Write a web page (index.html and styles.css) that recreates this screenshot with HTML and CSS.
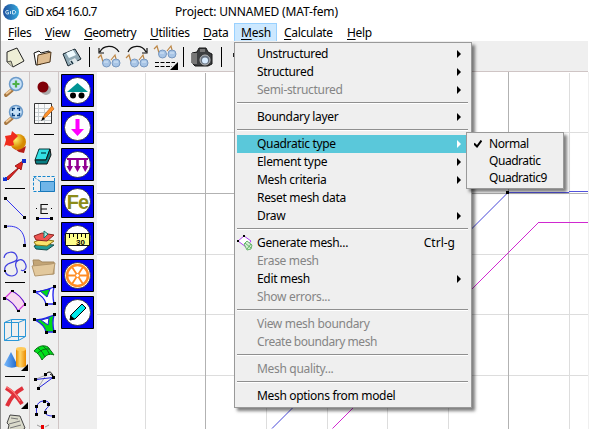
FILE: index.html
```html
<!DOCTYPE html>
<html lang="en">
<head>
<meta charset="utf-8">
<title>GiD x64 16.0.7</title>
<link rel="stylesheet" href="styles.css">
</head>
<body>
<div class="window">
  <header class="titlebar">
    <svg class="logo" viewBox="0 0 16 16"><defs><linearGradient id="lg"><stop offset="0" stop-color="#1f4f9c"/><stop offset="1" stop-color="#35a9dc"/></linearGradient></defs><circle cx="8" cy="8" r="8" fill="url(#lg)"/><path d="M5.5 6.5H3.5L2.5 8l1 2h2V8.300H4.500M7.500 7v3M9.500 6.500h2l1.500 1.500-1.500 2h-2z" fill="none" stroke="#d5ecf8" stroke-width=".9"/></svg>
    <span class="app">GiD x64 16.0.7</span>
    <span class="project">Project: UNNAMED (MAT-fem)</span>
  </header>
  <nav class="menubar">
    <span class="m-files"><u>F</u>iles</span><span class="m-view"><u>V</u>iew</span><span class="m-geo"><u>G</u>eometry</span><span class="m-util"><u>U</u>tilities</span><span class="m-data"><u>D</u>ata</span><span class="m-mesh"><u>M</u>esh</span><span class="m-calc"><u>C</u>alculate</span><span class="m-help"><u>H</u>elp</span>
  </nav>
  <div class="toolbar">
    <svg viewBox="1 41 28 30" width="28" height="30"><path d="M7 52l10-4 7 13-11 6-6-5z" fill="#eeeed6" stroke="#222"/><path d="M7 62l4-1 2 6" fill="#c8c8ae" stroke="#333" stroke-width=".8"/></svg>
    <svg viewBox="29 41 28 30" width="28" height="30"><path d="M34 53l5-2 2 2 8-2 1 3-9 10-5 1z" fill="#fff" stroke="#111"/><path d="M38 55l13-3-1 10-13 3z" fill="#dfbd91" stroke="#4d3519"/></svg>
    <svg viewBox="57 41 29 30" width="29" height="30"><path d="M63 54l12-5 6 10-13 7z" fill="#8fa9b5" stroke="#15252e"/><path d="M66 53l7-3 3 5-7 3z" fill="#eefbff"/><path d="M69 61l6-3 3 4-6 3z" fill="#dfe8eb"/><path d="M71 61l2 3" stroke="#193341" stroke-width="1.500"/></svg>
    <i class="vsep"></i>
    <svg viewBox="94 41 28 30" width="28" height="30"><use href="#glasses" x="0" y="0"/><path d="M100 52c3-7 14-8 19 0M99 48v5h5" fill="none" stroke="#111" stroke-width="1.200"/></svg>
    <svg viewBox="122 41 30 30" width="30" height="30"><use href="#glasses" x="28" y="0"/><path d="M128 52c3-7 14-8 18 0M147 48v5h-5" fill="none" stroke="#111" stroke-width="1.200"/></svg>
    <svg viewBox="152 41 28 30" width="28" height="30"><use href="#glasses" x="56" y="-9"/><path d="M155 62.500h20M155 66.500h17" stroke="#000" stroke-dasharray="4 1.500"/><path d="M178 62v8h-8z"/></svg>
    <i class="vsep"></i>
    <svg viewBox="188 41 30 30" width="30" height="30"><path d="M192 53l5-1 2-4h7l2 4 4 2v10l-4 2h-13l-3-3z" fill="#3c3e40" stroke="#151515"/><path d="M192 53h5v11h-5zM200 49h5v3h-5z" fill="#777"/><circle cx="205" cy="60" r="5" fill="#687381" stroke="#bbb"/><circle cx="205" cy="60.500" r="3" fill="#d9ecff"/></svg>
    <i class="vsep third"></i>
    <i class="peek"></i>
  </div>
  <svg width="0" height="0" class="defs"><defs>
    <g id="glasses"><path d="M98 58l3-3 2 7M111 60l4-5 2 8" fill="none" stroke="#bd8746" stroke-width="1.200"/><circle cx="106.500" cy="63" r="4" fill="#a8c5e6" stroke="#7898c0"/><circle cx="116" cy="63" r="4" fill="#a8c5e6" stroke="#7898c0"/><path d="M104 62h4M114 62h4" stroke="#d7e7f7"/></g>
    <g id="badge"><path d="M.5.500h32v32H.5z" fill="#0000f0" stroke="#000"/><circle cx="16.500" cy="16.500" r="13" fill="#fff" stroke="#111" stroke-width=".7"/></g>
    <linearGradient id="cone"><stop offset="0" stop-color="#7bbcff"/><stop offset="1" stop-color="#1761c7"/></linearGradient>
    <linearGradient id="cyl"><stop offset="0" stop-color="#e78b00"/><stop offset=".4" stop-color="#ffd568"/><stop offset="1" stop-color="#ec8c00"/></linearGradient>
    <radialGradient id="ball" cx=".35" cy=".35"><stop offset="0" stop-color="#fff26b"/><stop offset="1" stop-color="#d78b00"/></radialGradient>
  </defs></svg>
  <main class="work">
    <div class="tools one">
      <svg viewBox="1 72 28 28"><path d="M6 95l6-5" stroke="#a77842" stroke-width="4" stroke-linecap="round"/><path d="M6 94l5-4" stroke="#f0c997" stroke-width="2"/><circle cx="16" cy="84" r="6.500" fill="#c7e1f7" stroke="#6c9bca" stroke-width="1.500"/><path d="M16 80.500v7M12.500 84h7" stroke="#4fb04a" stroke-width="2.200"/></svg>
      <svg viewBox="1 100 28 28"><path d="M6 123l6-5" stroke="#a77842" stroke-width="4" stroke-linecap="round"/><path d="M6 122l5-4" stroke="#f0c997" stroke-width="2"/><circle cx="16" cy="112" r="6.500" fill="#c7e1f7" stroke="#6c9bca" stroke-width="1.500"/><path d="M12.500 111v-2.500h2.500M17 108.500h2.500v2.500M19.500 113v2.500h-2.500M15 115.500h-2.500v-2.500" fill="none" stroke="#063e7c" stroke-width="1.400"/></svg>
      <svg viewBox="1 128 28 28"><circle cx="18" cy="142" r="8" fill="url(#ball)"/><path d="M5 136l6-1 1-4 6 5-5 5 1 4-4 1-4-1-2 2 2-7z" fill="#ef2c1d"/><path d="M12 147l5 3 4-1 5-3-2 7-5-1z" fill="#b61e17"/></svg>
      <svg viewBox="1 156 28 28"><path d="M6 178L18 168l-3-2 8-5-2 9-2-2L8 180z" fill="#e02420" stroke="#a01818"/><path d="M3 177h4v4H3zM22 159h4v4h-4z" fill="#1330ce"/><path d="M3.500 177.500h1.500" stroke="#9dc5ff"/></svg>
      <i class="hsep"></i>
      <svg viewBox="1 194 28 28"><path d="M5 198l20 20" stroke="#3333ee"/><path d="M4 197h3v3H4zM23 216h3v3h-3z"/></svg>
      <svg viewBox="1 222 28 28"><path d="M5 226.500c13-2 20 5 20 18" fill="none" stroke="#3333ee"/><path d="M4 225h3v3H4zM23 244h3v3h-3z"/></svg>
      <svg viewBox="1 250 28 28"><path d="M4 258c1-7 11-8 13-1 1 5-5 5-9 7-6 4-3 12 4 12 6-1 6-5 4-9-2-7 6-10 9-4 3 5-1 9-4 7" fill="none" stroke="#4040e0" stroke-width="1.200"/><path d="M4 270h2v2H4zM24 271h2v2h-2z"/></svg>
      <i class="hsep"></i>
      <svg viewBox="1 288 28 28"><path d="M5 298l7-7c6 3 10 7 13 13l-7 7c-3-6-7-10-13-13z" fill="#f7d8f0" stroke="#d337dd" stroke-width="1.200"/><path d="M12 291c6 3 10 7 13 13M5 298c6 3 10 7 13 13" fill="none" stroke="#4b32cd"/><path d="M3 297h3v3H3zM11 290h3v2h-3zM24 303h2v3h-2zM17 310h3v2h-3z"/></svg>
      <svg viewBox="1 316 28 28"><path d="M4.500 322.500h14v18h-14zM11.500 319.500h14v17h-14zM4.500 322.500l7-3M18.500 322.500l7-3M4.500 340.500l7-4M18.500 340.500l7-4" fill="none" stroke="#2996d7"/></svg>
      <svg viewBox="1 344 28 28"><path d="M4 365l7-13 7 14q-7 4-14-1z" fill="url(#cone)"/><path d="M16 349v17q5 3 10 0v-17z" fill="url(#cyl)"/><ellipse cx="21" cy="349" rx="5" ry="2" fill="#ffcb5a"/><path d="M28 364v7h-7z"/></svg>
      <i class="hsep"></i>
      <svg viewBox="1 382 28 28"><path d="M6 388q9 5 16 16M23 388q-11 6-16 18" fill="none" stroke="#e0303a" stroke-width="4"/><path d="M6 387q9 4 14 14" fill="none" stroke="#ff7c79" stroke-width="1.300"/><path d="M28 402v7h-7z"/></svg>
      <svg viewBox="1 410 28 28"><path d="M10 415l10 1 5 12-7 6H7l2-9-2-2z" fill="#dadacb" stroke="#454545"/><path d="M11 418l7 1M9 424l11-3M10 428l11-3" stroke="#777"/></svg>
    </div>
    <div class="tools two">
      <svg viewBox="30 72 28 28"><circle cx="46" cy="90" r="5" fill="#aaa"/><circle cx="43" cy="87" r="5.500" fill="#800008"/></svg>
      <svg viewBox="30 100 28 28"><path d="M34.500 103.500h17v20h-17z" fill="#fafafa" stroke="#333"/><path d="M35 108.500h16M35 112.500h16M35 116.500h16M35 120.500h16M38.500 104v19M44.500 104v19" stroke="#c8ced0"/><path d="M42 119l3-5 7-8 2 3-8 8z" fill="#ff922b" stroke="#b8641b" stroke-width=".7"/><path d="M41 121l2-4 2 2z"/></svg>
      <i class="hsep tall"></i>
      <svg viewBox="30 142 28 28"><path d="M39 149h11l-4 11H35z" fill="#33e0e5" stroke="#08383b"/><path d="M35 160h11l4-11 1 6-4 9H36z" fill="#087e83" stroke="#111"/><path d="M41 153h5" stroke="#075f64" stroke-width="1.500"/></svg>
      <svg viewBox="30 170 28 28"><path d="M33.500 176.500h21v15h-21zM34 177l7 5" fill="none" stroke="#1687ce" stroke-dasharray="3 1.500"/><path d="M40.500 181.500h14v10h-14z" fill="#70b5e8" stroke="#1878ba"/></svg>
      <svg viewBox="30 198 28 28"><path d="M48 204.500h-7v9h7M41 209h6" fill="none" stroke="#111" stroke-width="1.200"/><path d="M37 218.500h14" stroke="#2222ee"/><path d="M36 217h3v3h-3zM50 217h3v3h-3zM36 208h1v1h-1zM51 208h1v1h-1z"/></svg>
      <svg viewBox="30 226 28 28"><path d="M34 246l7-2 13 1-7 5-11-1z" fill="#219c97" stroke="#164b4a"/><path d="M34 242l8-3 12 2-7 5-11-1z" fill="#fbe26b" stroke="#8a7411"/><path d="M34 236l8-3 12 2-7 6-11-1z" fill="#ee5551" stroke="#872320"/><path d="M44 238v-7l4 3z" fill="#a7e7df" stroke="#167870"/></svg>
      <svg viewBox="30 254 28 28"><path d="M33 260h6l3 2h12v12H35z" fill="#c3a576" stroke="#a3875d"/><path d="M32 266l19-2 4-1-2 11-18 2z" fill="#e2c89c" stroke="#b3976d"/></svg>
      <svg viewBox="30 282 28 28"><path d="M35 292c8 0 13-3 19-5-2 7-1 12 0 17h-8c-1-5-5-9-11-12z" fill="#fff" stroke="#2020ee" stroke-width="1.300"/><path d="M40 291l10-2-3 8z" fill="#00d91a" stroke="#2020dd"/><path d="M33 290h3v3h-3zM53 285h3v3h-3zM45 303h3v3h-3zM53 302h3v3h-3z"/></svg>
      <svg viewBox="30 310 28 28"><path d="M35 320c8 0 13-3 19-5-2 7-1 12 0 17h-8c-1-5-5-9-11-12z" fill="#00d91a" stroke="#2020ee" stroke-width="1.300"/><path d="M41 320l8-2-1 7z" fill="#fff" stroke="#2020dd"/><path d="M33 318h3v3h-3zM53 313h3v3h-3zM45 331h3v3h-3zM53 330h3v3h-3z"/></svg>
      <svg viewBox="30 338 28 28"><path d="M34 351c5-6 10-6 14-4l6 8c-5-2-8 0-12 5-2-4-4-7-8-9z" fill="#00e01c" stroke="#0b6f17"/><path d="M38 348q5 4 7 9M43 346q5 4 7 9M37 354q5-6 13-5" fill="none" stroke="#0b6f17"/></svg>
      <svg viewBox="30 366 28 28"><path d="M36 379l10-4-8 13" fill="none" stroke="#aaa"/><path d="M36 379.500l17-2-15 11" fill="none" stroke="#2222dd"/><path d="M47 373q4-3 6 3l-3-2" fill="none" stroke="#000"/><path d="M34 378h3v3h-3zM44 373h3v3h-3zM52 376h3v3h-3zM37 387h3v3h-3z"/></svg>
      <svg viewBox="30 394 28 28"><path d="M37 415c-2-9 1-14 7-14 7 0 6 5 2 8-3 5 1 7 7 7" fill="none" stroke="#2222dd"/><path d="M35 413h3v3h-3zM35 405h3v3h-3zM43 400h3v3h-3zM47 403h3v3h-3zM44 411h3v3h-3zM52 415h3v3h-3z"/></svg>
      <svg viewBox="30 422 28 28"><path d="M41 425h3v4h-3z" fill="#e80000"/><path d="M37 425l4 2M45 427l4-2" stroke="#999"/></svg>
    </div>
    <div class="badges">
      <svg viewBox="0 0 33 33"><use href="#badge"/><path d="M6 18l10.500-9L27 18z" fill="#009393"/><circle cx="12" cy="21.500" r="3"/><circle cx="20.500" cy="21.500" r="3"/></svg>
      <svg viewBox="0 0 33 33"><use href="#badge"/><path d="M14.500 8h4v10h4.500l-6.500 7-6.500-7h4.500z" fill="#f0f"/></svg>
      <svg viewBox="0 0 33 33"><use href="#badge"/><path d="M6 10h21v2H6zM7.500 12h2.500v6h2l-3.200 6-3.300-6h2zM15.200 12h2.600v6h2l-3.300 6-3.300-6h2zM23 12h2.500v6h2l-3.300 6-3.200-6h2z" fill="#920092"/></svg>
      <svg viewBox="0 0 33 33"><use href="#badge"/><text x="16.500" y="24" text-anchor="middle" class="fe">Fe</text></svg>
      <svg viewBox="0 0 33 33"><use href="#badge"/><path d="M4.500 11.500h24v12h-24z" fill="#ffff8b" stroke="#111"/><path d="M8.500 12v4M12.500 12v3M16.500 12v5M20.500 12v3M24.500 12v4" stroke="#000"/><text x="19.500" y="23" text-anchor="middle" class="thirty">30</text></svg>
      <svg viewBox="0 0 33 33"><use href="#badge"/><circle cx="16.500" cy="16.500" r="10.500" fill="none" stroke="#ff8d24" stroke-width="2.500"/><path d="M6 16.500h21M11 8l11 17M22 8L11 25" stroke="#ff8d24" stroke-width="1.800"/><circle cx="16.500" cy="16.500" r="2" fill="#fff" stroke="#ff8d24"/></svg>
      <svg viewBox="0 0 33 33"><use href="#badge"/><path d="M10 19L21 8l4 4-11 11-5 1z" fill="#00e8e8" stroke="#000"/><path d="M9 19l5 4-5 1z"/></svg>
    </div>
    <svg class="canvas" viewBox="97 72 491 357" shape-rendering="crispEdges">
      <path d="M145.500 73v356M266.500 73v356M327.500 73v356M387.500 73v356M448.500 73v356M569.500 73v356M97 132.500h491M97 254.500h491M97 314.500h491M97 375.500h491" stroke="#ddd"/>
      <path d="M205.500 73v356M508.500 72v357M97 193.500h491" stroke="#b2b2b2"/>
      <path d="M508 192.500h61M569 191.500h19" fill="none" stroke="#5353dc"/>
      <path d="M538 222.500h50" stroke="#d029d0"/>
      <path class="slope" d="M272 428.500L508 192.500" stroke="#4747d8"/>
      <path class="slope" d="M332.500 428.500L538.500 222.500" stroke="#d029d0"/>
      <path d="M506 191h3v3h-3z"/>
    </svg>
  </main>
</div>
<div class="menu mesh">
  <div class="sub"><b>Unstructured</b></div>
  <div class="sub"><b>Structured</b></div>
  <div class="sub off"><b>Semi-structured</b></div>
  <hr>
  <div class="sub"><b>Boundary layer</b></div>
  <hr>
  <div class="sub active"><b>Quadratic type</b></div>
  <div class="sub"><b>Element type</b></div>
  <div class="sub"><b>Mesh criteria</b></div>
  <div><b>Reset mesh data</b></div>
  <div class="sub"><b>Draw</b></div>
  <hr>
  <div><svg class="gen" viewBox="0 0 17 17"><path d="M1 7l6-5 7 5-5 6z" fill="#fff" stroke="#b143f4"/><path d="M7 10l3-3 5 4-1 4-4 1zM8 9l6 5M14 10l-4 5" fill="#d5efd5" stroke="#48a64d" stroke-width=".8"/><path d="M0 6h2v2H0zM6 1h2v2H6z"/></svg><b>Generate mesh...</b><span class="key">Ctrl-g</span></div>
  <div class="off"><b>Erase mesh</b></div>
  <div class="sub"><b>Edit mesh</b></div>
  <div class="off"><b>Show errors...</b></div>
  <hr>
  <div class="off"><b>View mesh boundary</b></div>
  <div class="off"><b class="tight">Create boundary mesh</b></div>
  <hr>
  <div class="off"><b>Mesh quality...</b></div>
  <hr>
  <div><b>Mesh options from model</b></div>
</div>
<div class="menu types">
  <div><svg class="check" viewBox="0 0 8 8"><path d="M0 3.500l3 3 4.500-6" fill="none" stroke="#000" stroke-width="2"/></svg><b>Normal</b></div>
  <div><b>Quadratic</b></div>
  <div><b>Quadratic9</b></div>
</div>
</body>
</html>
```
FILE: styles.css
```css
* { box-sizing: border-box; }
body { margin: 0; background: #fff; color: #000; overflow: hidden; font: 12px/18px "Noto Sans", "Open Sans", sans-serif; white-space: nowrap; }
.window { width: 589px; height: 429px; overflow: hidden; border-left: 1px solid #8b8b8b; display: flex; flex-direction: column; }
svg { display: block; flex: none; }
.defs { position: absolute; }
.titlebar { height: 23px; flex: none; display: flex; align-items: center; padding-left: 2px; }
.logo { width: 16px; height: 16px; margin-right: 6px; }
.app { width: 150px; letter-spacing: -.65px; }
.project { letter-spacing: -.15px; }
.menubar { height: 18px; flex: none; display: flex; }
.menubar span { padding-left: 7px; height: 19px; line-height: 19px; letter-spacing: -.3px; flex: none; }
.menubar u { text-underline-offset: 2px; text-decoration-thickness: 1px; }
.m-files { width: 37px; }
.m-view { width: 39px; }
.menubar .m-geo { width: 66px; letter-spacing: -.5px; }
.m-util { width: 53px; }
.m-data { width: 38px; }
.menubar .m-mesh { width: 43px; padding-left: 6px; letter-spacing: -.2px; background: #cce8ff; border: 1px solid #99d1ff; line-height: 17px; }
.m-calc { width: 63px; }
.m-help { width: 40px; }
.toolbar { height: 31px; width: 587px; flex: none; background: #efefef; border-bottom: 1px solid #cfc5c5; display: flex; }
.vsep { flex: none; width: 1px; height: 20px; margin: 6px 4px 0 3px; background: #000; }
.vsep.third { margin-right: 11px; }
.peek { width: 2px; height: 4px; margin-top: 12px; background: #222; }
.work { height: 357px; display: flex; background: #efefef; }
.tools { width: 29px; border-right: 1px solid #cfc5c5; flex: none; overflow: hidden; }
.tools svg { width: 28px; height: 28px; }
.hsep { display: block; height: 10px; padding: 4px 4px 5px; background: #000 content-box; }
.hsep.tall { height: 14px; padding: 6px 4px 7px; }
.badges { width: 38px; flex: none; padding: 2px 0 0 2px; display: flex; flex-direction: column; gap: 4px; }
.badges svg { width: 33px; height: 33px; }
.fe { font: bold 20px "Liberation Sans", sans-serif; letter-spacing: -1px; fill: #8c8c19; }
.thirty { font: bold 8px "Liberation Sans", sans-serif; }
.canvas { width: 491px; height: 357px; background: #fff; }
.slope { shape-rendering: auto; }
.menu { position: absolute; background: #efefef; border: 1px solid #999; box-shadow: 3px 3px 3px rgba(0,0,0,.5); }
.menu div { height: 18px; padding-left: 20px; position: relative; display: flex; }
.menu b { font-weight: 400; letter-spacing: -.32px; }
.menu .tight { letter-spacing: -.45px; }
.mesh { left: 234px; top: 42px; width: 238px; height: 366px; padding: 2px; }
.menu hr { margin: 3px 1px 4px 0; height: 2px; border: 0; border-top: 1px solid #8f8f8f; border-bottom: 1px solid #fff; }
.menu .off { color: #858585; }
.menu .active { background: #5ac8da; }
.sub::after { content: ""; margin: 5px 8px 0 auto; width: 0; height: 0; border: solid transparent; border-width: 4px 0 4px 4px; border-left-color: #000; }
.sub.active::after { border-left-color: #fff; }
.gen { position: absolute; left: 0; top: 0; width: 17px; height: 17px; }
.key { margin: 0 14px 0 auto; }
.types { left: 466px; top: 132px; width: 98px; height: 57px; padding: 2px; }
.types div { height: 17px; line-height: 17px; }
.types b { letter-spacing: -.45px; }
.check { position: absolute; left: 5px; top: 5px; width: 8px; height: 8px; }
```
